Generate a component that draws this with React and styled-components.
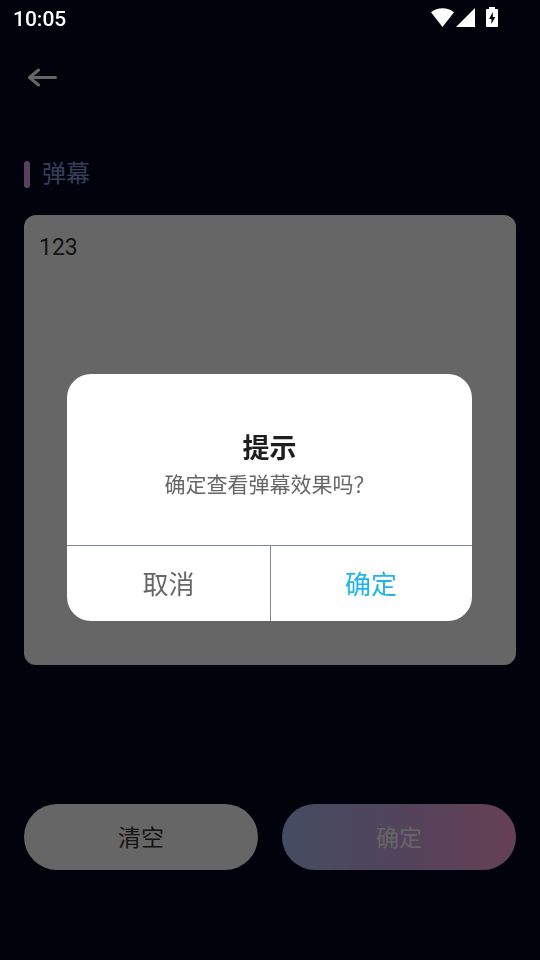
import React, { useState } from "react";
import styled, { createGlobalStyle } from "styled-components";

const App = () => {
	const [text, setText] = useState("123");
	const [open, setOpen] = useState(true);

	return (
		<>
			<GlobalStyle />
			<StatusBar>
				<Clock>10:05</Clock>
				<StatusIcons />
			</StatusBar>
			<Page>
				<Header>
					<BackButton type="button" aria-label="返回">
						<BackArrow />
					</BackButton>
				</Header>
				<Main>
					<Label htmlFor="danmu">弹幕</Label>
					<TextBox
						id="danmu"
						value={text}
						onChange={(e) => setText(e.target.value)}
					/>
				</Main>
				<Actions>
					<PillButton type="button" onClick={() => setText("")}>
						清空
					</PillButton>
					<PillButton type="button" $primary onClick={() => setOpen(true)}>
						确定
					</PillButton>
				</Actions>
			</Page>
			{open && (
				<Overlay>
					<Dialog role="dialog" aria-modal="true" aria-labelledby="dialog-title">
						<DialogBody>
							<DialogTitle id="dialog-title">提示</DialogTitle>
							<Message>确定查看弹幕效果吗？</Message>
						</DialogBody>
						<DialogActions>
							<DialogButton type="button" onClick={() => setOpen(false)}>
								取消
							</DialogButton>
							<DialogButton
								type="button"
								$confirm
								onClick={() => setOpen(false)}
							>
								确定
							</DialogButton>
						</DialogActions>
					</Dialog>
				</Overlay>
			)}
		</>
	);
};

export default App;

const BackArrow = () => (
	<svg width="30" height="20" viewBox="0 0 30 20" fill="none" aria-hidden="true">
		<path
			d="M27.500 9.500H2M10.500 2L1.500 9.500l9 7.500"
			stroke="#fff"
			strokeWidth="3"
			strokeLinecap="round"
			strokeLinejoin="round"
		/>
	</svg>
);

const StatusIcons = () => (
	<svg width="68" height="20" viewBox="0 0 68 20" fill="#fff" aria-hidden="true">
		<path d="M1 5.200C4.200 2.500 8.200 1.200 12.500 1.200S20.800 2.500 24 5.200L12.500 20z" />
		<path d="M45 1v19H26z" />
		<path
			fillRule="evenodd"
			d="M59 0h6v2h2.200c.5 0 .8.3.8.8v16.400c0 .5-.3.8-.8.8H56.800c-.5 0-.8-.3-.8-.8V2.800c0-.5.3-.8.8-.8H59zM62.800 5L59 12h2.400v5l3.800-7h-2.400z"
		/>
	</svg>
);

const GlobalStyle = createGlobalStyle`
	* {
		box-sizing: border-box;
	}
	body {
		margin: 0;
		background: #00081e;
		font-family: Roboto, "Noto Sans CJK SC", sans-serif;
	}
	button,
	textarea {
		font-family: inherit;
		border: none;
	}
	button {
		padding: 0 0 2px;
		cursor: pointer;
	}
`;

const StatusBar = styled.div`
	position: fixed;
	top: 0;
	left: 0;
	right: 0;
	z-index: 3;
	display: flex;
	justify-content: space-between;
	align-items: center;
	height: 34px;
	padding: 0 42px 0 13px;
	color: white;
`;

const Clock = styled.time`
	padding-top: 4px;
	font-size: 21px;
	font-weight: 500;
	line-height: 30px;
`;

const Page = styled.div`
	display: flex;
	flex-direction: column;
	min-height: 100vh;
	padding: 36px 24px 90px;
`;

const Header = styled.header`
	display: flex;
	align-items: center;
	height: 84px;
`;

const BackButton = styled.button`
	display: flex;
	padding: 4px;
	background: none;
`;

const Main = styled.main`
	display: flex;
	flex-direction: column;
	gap: 23px;
	padding: 37px 0 36px;
`;

const Label = styled.label`
	display: flex;
	align-items: center;
	gap: 12px;
	color: #8c9bdc;
	font-size: 24px;
	line-height: 35px;
	&::before {
		content: "";
		width: 6px;
		height: 27px;
		border-radius: 3px;
		background: linear-gradient(90deg, #c8aaff, #f09bd2);
	}
`;

const TextBox = styled.textarea`
	display: block;
	width: 100%;
	height: 450px;
	padding: 16px 15px;
	border-radius: 12px;
	background: white;
	color: #333;
	font-size: 23px;
	line-height: 34px;
	resize: none;
	outline: none;
`;

const Actions = styled.footer`
	display: grid;
	grid-template-columns: 1fr 1fr;
	gap: 24px;
	margin-top: auto;
`;

const PillButton = styled.button`
	height: 66px;
	border-radius: 33px;
	background: ${({ $primary }) =>
		$primary
			? "linear-gradient(90deg, #aabef5, #cdaae6 50%, #ffa0d2)"
			: "white"};
	color: ${({ $primary }) => ($primary ? "white" : "#333")};
	font-size: 23px;
`;

const Overlay = styled.div`
	position: fixed;
	inset: 0;
	z-index: 2;
	display: flex;
	justify-content: center;
	align-items: center;
	padding: 35px 1px 0 0;
	background: rgba(0, 0, 0, 0.6);
`;

const Dialog = styled.section`
	width: 75%;
	border-radius: 24px;
	background: white;
	overflow: hidden;
`;

const DialogBody = styled.div`
	padding: 55px 24px 44px;
	text-align: center;
`;

const DialogTitle = styled.h2`
	margin: 0;
	color: #1e1e1e;
	font-size: 27px;
	line-height: 40px;
`;

const Message = styled.p`
	margin: 0;
	color: #666;
	font-size: 21px;
	line-height: 32px;
`;

const DialogActions = styled.div`
	display: grid;
	grid-template-columns: 1fr 1fr;
	border-top: 1px solid #7f8894;
`;

const DialogButton = styled.button`
	height: 75px;
	background: none;
	color: ${({ $confirm }) => ($confirm ? "#1eb4eb" : "#666")};
	font-size: 26px;
	& + & {
		border-left: 1px solid #7f8894;
	}
`;
